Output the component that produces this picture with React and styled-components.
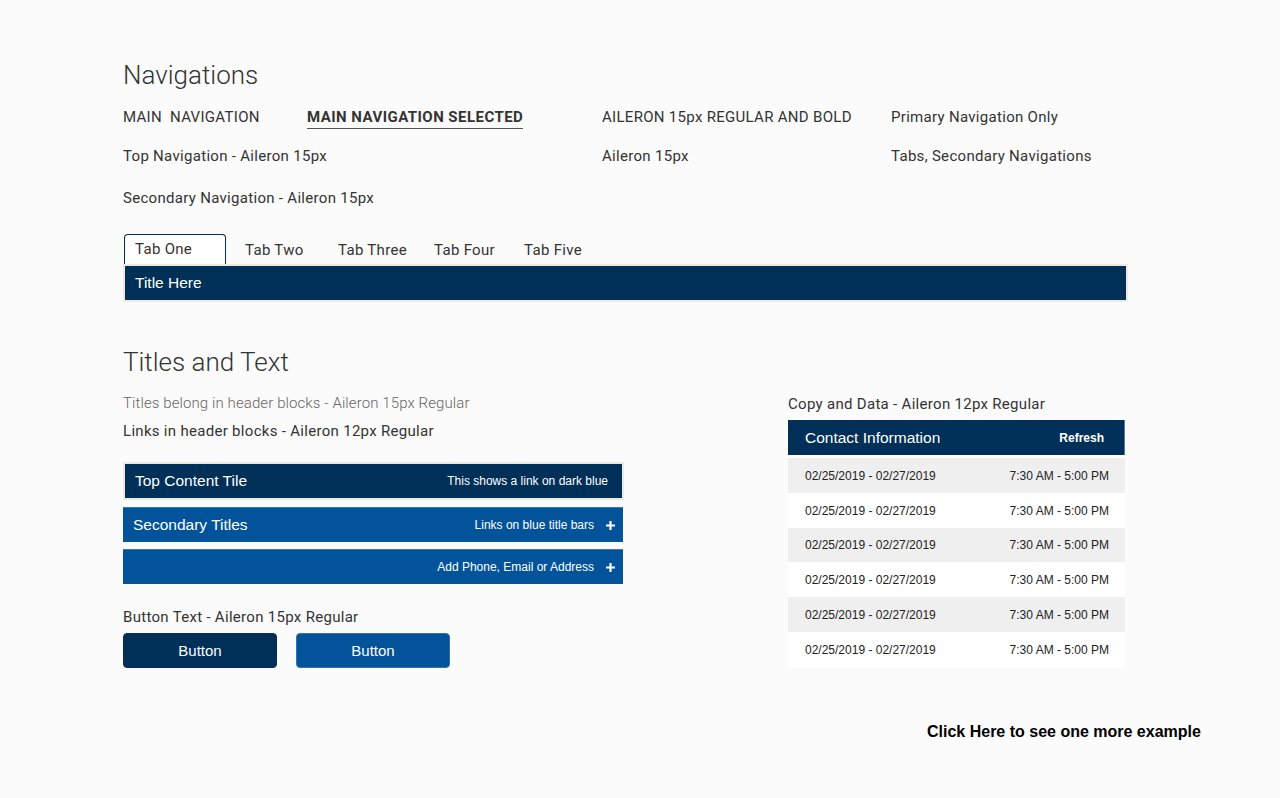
import React from 'react';
import styled, { createGlobalStyle } from 'styled-components';

const GlobalStyle = createGlobalStyle`
  html, body {
    margin: 0;
    padding: 0;
    background: #fbfbfb;
  }
  body {
    font-family: Roboto, "Liberation Sans", Arial, sans-serif;
    color: #333;
  }
`;

const NAVY = '#003057';
const BLUE = '#02539a';

const Page = styled.div`
  width: 1280px;
  height: 798px;
  box-sizing: border-box;
  padding: 59px 0 0 123px;
  position: relative;
`;

const Heading = styled.h1`
  margin: 0;
  font-family: Roboto, sans-serif;
  font-weight: 300;
  font-size: 26px;
  line-height: 32px;
  color: #333;
`;

const NavGrid = styled.div`
  display: grid;
  grid-template-columns: 184px 295px 289px auto;
  grid-template-rows: 39px 42px 20px;
  margin-top: 16px;
  width: 1004px;
  font-size: 15px;
  line-height: 20px;
  letter-spacing: 0.3px;
`;

const NavCell = styled.div`
  grid-column: ${p => p.$col};
  grid-row: ${p => p.$row};
  white-space: pre;
  color: #333;
`;

const SelectedNav = styled.span`
  font-weight: 700;
  letter-spacing: 0.45px;
  border-bottom: 1px solid #555;
  padding-bottom: 2px;
`;

const TabRow = styled.div`
  display: flex;
  align-items: flex-end;
  margin-top: 26px;
  height: 30px;
  letter-spacing: 0.3px;
`;

const Tab = styled.div`
  box-sizing: border-box;
  height: ${p => (p.$active ? 30 : 28)}px;
  padding: ${p => (p.$active ? '0 10px' : '0 0 0 19px')};
  width: ${p => p.$w}px;
  margin-left: ${p => (p.$active ? 1 : 0)}px;
  font-size: 15px;
  line-height: 28px;
  color: #333;
  border: ${p => (p.$active ? `1px solid ${NAVY}` : 'none')};
  border-bottom: none;
  border-radius: 4px 4px 0 0;
  background: ${p => (p.$active ? '#fff' : 'transparent')};
`;

const TitleBar = styled.div`
  display: flex;
  align-items: center;
  justify-content: space-between;
  box-sizing: border-box;
  width: ${p => p.$w}px;
  height: ${p => p.$h || 38}px;
  padding: 0 ${p => p.$pr || 14}px 0 ${p => p.$pl || 10}px;
  background: ${p => (p.$blue ? BLUE : NAVY)};
  border: ${p => (p.$framed ? '2px solid #efeadb' : 'none')};
  border-top: ${p => (p.$blue ? '1px solid #3a76b3' : p.$framed ? '2px solid #efeadb' : 'none')};
  margin-top: ${p => p.$mt || 0}px;
  color: #fff;
  font-family: "Liberation Sans", Arial, sans-serif;
`;

const BarTitle = styled.span`
  font-size: 15.5px;
`;

const BarLink = styled.span`
  display: flex;
  align-items: center;
  gap: 11px;
  font-size: 12px;
  margin-left: auto;
`;

const Plus = () => (
  <svg width="11" height="11" viewBox="0 0 11 11">
    <path d="M5.5 1v9M1 5.5h9" stroke="#fff" strokeWidth="2.2" />
  </svg>
);

const Columns = styled.div`
  display: flex;
  margin-top: 44px;
`;

const LeftCol = styled.div`
  width: 665px;
`;

const RightCol = styled.div`
  width: 338px;
  padding-top: 48px;
`;

const SubText = styled.div`
  font-size: 15px;
  line-height: 20px;
  letter-spacing: ${p => (p.$light ? 0.1 : 0.3)}px;
  font-weight: ${p => (p.$light ? 300 : 400)};
  color: ${p => (p.$light ? '#666' : '#333')};
  margin-top: ${p => p.$mt || 0}px;
`;

const ButtonRow = styled.div`
  display: flex;
  gap: 19px;
  margin-top: 6px;
`;

const Button = styled.button`
  box-sizing: border-box;
  width: 154px;
  height: 35px;
  border-radius: 4px;
  border: 1px solid ${p => (p.$blue ? '#3a6fa8' : NAVY)};
  background: ${p => (p.$blue ? BLUE : NAVY)};
  color: #fff;
  font-family: "Liberation Sans", Arial, sans-serif;
  font-size: 15px;
  cursor: pointer;
`;

const Table = styled.div`
  width: 337px;
  margin-top: 6px;
  background: #fff;
  font-family: "Liberation Sans", Arial, sans-serif;
`;

const TableHead = styled.div`
  display: flex;
  align-items: center;
  justify-content: space-between;
  height: 35px;
  padding: 0 20px 0 17px;
  background: ${NAVY};
  border-right: 1px solid #5a7a99;
  color: #fff;
  margin-bottom: 3px;
`;

const HeadTitle = styled.span`
  font-size: 15.5px;
`;

const HeadLink = styled.span`
  font-size: 12px;
  font-weight: 700;
`;

const Row = styled.div`
  display: flex;
  align-items: center;
  justify-content: space-between;
  height: 34.8px;
  padding: 1px 16px 0 17px;
  box-sizing: border-box;
  background: ${p => (p.$alt ? '#efefef' : '#fff')};
  font-size: 12px;
  color: #222;
`;

const MoreLink = styled.a`
  position: absolute;
  left: 927px;
  top: 723px;
  font-family: "Liberation Sans", Arial, sans-serif;
  font-size: 16px;
  font-weight: 700;
  color: #000;
  text-decoration: none;
`;

export default function App() {
  const rows = [0, 1, 2, 3, 4, 5];
  return (
    <>
      <GlobalStyle />
      <Page>
        <Heading>Navigations</Heading>
        <NavGrid>
          <NavCell $col={1} $row={1}>{'MAIN  NAVIGATION'}</NavCell>
          <NavCell $col={2} $row={1}><SelectedNav>MAIN NAVIGATION SELECTED</SelectedNav></NavCell>
          <NavCell $col={3} $row={1}>AILERON 15px REGULAR AND BOLD</NavCell>
          <NavCell $col={4} $row={1}>Primary Navigation Only</NavCell>
          <NavCell $col="1 / 3" $row={2}>Top Navigation - Aileron 15px</NavCell>
          <NavCell $col={3} $row={2}>Aileron 15px</NavCell>
          <NavCell $col={4} $row={2}>Tabs, Secondary Navigations</NavCell>
          <NavCell $col="1 / 3" $row={3}>Secondary Navigation - Aileron 15px</NavCell>
        </NavGrid>

        <TabRow>
          <Tab $active $w={102}>Tab One</Tab>
          <Tab $w={93}>Tab Two</Tab>
          <Tab $w={96}>Tab Three</Tab>
          <Tab $w={90}>Tab Four</Tab>
          <Tab $w={80}>Tab Five</Tab>
        </TabRow>
        <TitleBar $w={1005} $framed>
          <BarTitle>Title Here</BarTitle>
        </TitleBar>

        <Columns>
          <LeftCol>
            <Heading>Titles and Text</Heading>
            <SubText $light $mt={15}>Titles belong in header blocks - Aileron 15px Regular</SubText>
            <SubText $mt={8}>Links in header blocks - Aileron 12px Regular</SubText>

            <TitleBar $w={501} $framed $mt={21}>
              <BarTitle>Top Content Tile</BarTitle>
              <BarLink>This shows a link on dark blue</BarLink>
            </TitleBar>
            <TitleBar $w={500} $h={35} $blue $mt={7} $pr={7}>
              <BarTitle>Secondary Titles</BarTitle>
              <BarLink>Links on blue title bars <Plus /></BarLink>
            </TitleBar>
            <TitleBar $w={500} $h={35} $blue $mt={7} $pr={7}>
              <BarLink>Add Phone, Email or Address <Plus /></BarLink>
            </TitleBar>

            <SubText $mt={23}>Button Text - Aileron 15px Regular</SubText>
            <ButtonRow>
              <Button>Button</Button>
              <Button $blue>Button</Button>
            </ButtonRow>
          </LeftCol>

          <RightCol>
            <SubText>Copy and Data - Aileron 12px Regular</SubText>
            <Table>
              <TableHead>
                <HeadTitle>Contact Information</HeadTitle>
                <HeadLink>Refresh</HeadLink>
              </TableHead>
              {rows.map(i => (
                <Row key={i} $alt={i % 2 === 0}>
                  <span>02/25/2019 - 02/27/2019</span>
                  <span>7:30 AM - 5:00 PM</span>
                </Row>
              ))}
            </Table>
          </RightCol>
        </Columns>

        <MoreLink href="#">Click Here to see one more example</MoreLink>
      </Page>
    </>
  );
}
